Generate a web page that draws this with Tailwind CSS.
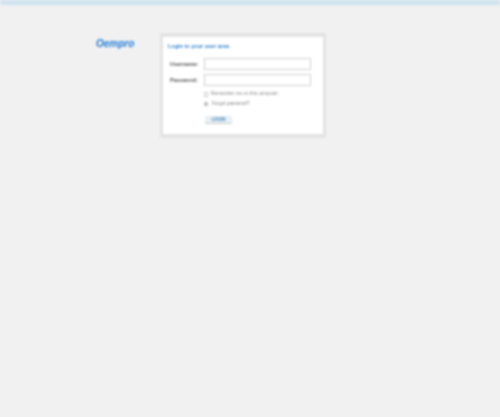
<!DOCTYPE html>
<html lang="en">
<head>
  <meta charset="UTF-8" />
  <title>Oempro Login</title>
  <script src="https://cdn.jsdelivr.net/npm/@tailwindcss/browser@4"></script>
</head>
<body class="bg-[#f1f1f1] font-['Liberation_Sans',Arial,sans-serif]">
  <div class="w-[500px] h-[417px] overflow-hidden">
    <div class="h-[5px] bg-[#cfe2f0] blur-[1.5px]"></div>
    <div class="flex items-start pt-[28px] pl-[96px]">
      <div class="w-[64px] pt-[3px] text-[10px] leading-[16px] font-bold italic text-[#1f7ad6] blur-[0.8px]">Oempro</div>
      <div class="w-[166px] h-[105px] bg-[#e4e4e4] px-[3px] py-[4px] blur-[0.9px]">
        <div class="h-full bg-white pl-[5px] pt-[5px]">
          <h1 class="text-[5.5px] leading-[8px] font-bold text-[#2f80cc]">Login to your user area</h1>
          <div class="mt-[8px] flex items-center h-[12px]">
            <label class="w-[36px] pl-[2px] text-[5.5px] font-bold text-[#555]">Username:</label>
            <input class="w-[107px] h-[12px] bg-white border border-[#d0d0d0]" />
          </div>
          <div class="mt-[4px] flex items-center h-[12px]">
            <label class="w-[36px] pl-[2px] text-[5.5px] font-bold text-[#555]">Password:</label>
            <input class="w-[107px] h-[12px] bg-white border border-[#d0d0d0]" />
          </div>
          <div class="mt-[5px] ml-[36px] flex items-center gap-[3px] h-[6px]">
            <span class="w-[4px] h-[5px] border border-[#ccc]"></span>
            <span class="text-[4.7px] text-[#888]">Remember me on this computer</span>
          </div>
          <div class="mt-[4px] ml-[36px] flex items-center gap-[4px] h-[6px]">
            <span class="w-[4px] h-[4px] bg-[#c4c4c4]"></span>
            <span class="text-[4.7px] text-[#888]">Forgot password?</span>
          </div>
          <button class="block mt-[9px] ml-[37px] w-[27px] h-[8px] bg-[#e8f0f5] border-b border-[#ccc] text-[4.5px] leading-[7px] font-bold text-[#4a87b5]">LOGIN</button>
        </div>
      </div>
    </div>
  </div>
</body>
</html>
